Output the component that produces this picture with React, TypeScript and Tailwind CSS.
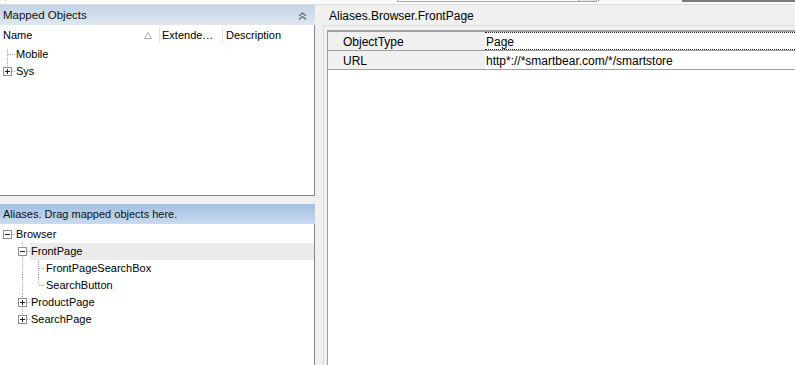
import React from "react";

const DOT = "#a3a3a3";

function V({ x, y1, y2 }: { x: number; y1: number; y2: number }) {
  return (
    <line x1={x + 0.5} x2={x + 0.5} y1={y1} y2={y2} stroke={DOT} strokeDasharray="1 1" shapeRendering="crispEdges" />
  );
}
function H({ y, x1, x2 }: { y: number; x1: number; x2: number }) {
  return (
    <line y1={y + 0.5} y2={y + 0.5} x1={x1} x2={x2} stroke={DOT} strokeDasharray="1 1" shapeRendering="crispEdges" />
  );
}
function Box({ x, y, plus }: { x: number; y: number; plus?: boolean }) {
  return (
    <g shapeRendering="crispEdges">
      <rect x={x + 0.5} y={y + 0.5} width={8} height={8} fill="#fff" stroke="#8e8f8f" />
      <line x1={x + 2} x2={x + 7} y1={y + 4.5} y2={y + 4.5} stroke="#222" />
      {plus && <line x1={x + 4.5} x2={x + 4.5} y1={y + 2} y2={y + 7} stroke="#222" />}
    </g>
  );
}

function Row({
  w,
  children,
  label,
  selected,
}: {
  w: number;
  children: React.ReactNode;
  label: string;
  selected?: boolean;
}) {
  return (
    <div className="flex h-[17px] items-stretch">
      <svg width={w} height={17} className="shrink-0">
        {children}
      </svg>
      <div className={`flex flex-1 items-center pl-px ${selected ? "bg-[#ebebeb]" : ""}`}>{label}</div>
    </div>
  );
}

function Row0({ w, children, label }: { w: number; children: React.ReactNode; label: string }) {
  return (
    <div className="flex h-[17px] items-stretch">
      <svg width={w} height={17} className="shrink-0">
        {children}
      </svg>
      <div className="flex flex-1 items-center">{label}</div>
    </div>
  );
}

export default function App() {
  return (
    <div
      className="w-[795px] h-[365px] overflow-hidden bg-[#f0f0f0] text-[11px] leading-none text-black flex flex-col"
      style={{ fontFamily: '"Liberation Sans", Arial, sans-serif' }}
    >
      {/* top strip */}
      <div className="h-[5px] shrink-0 bg-[#fbfbfb] border-b border-[#dcdcdc] flex items-start">
        <div className="ml-[5px] w-px h-px bg-[#bbb]" />
        <div className="ml-[391px] w-[183px] h-[2px] border-x border-b border-[#a9a9a9]" />
        <div className="w-[18px] h-[2px] bg-[#e3e3e3] border-r border-b border-[#a9a9a9]" />
        <div className="ml-px w-px h-px bg-[#777]" />
        <div className="ml-[83px] w-[113px] h-[2px] bg-[#7a7a7a]" />
      </div>

      <div className="flex flex-1 min-h-0">
        {/* left column */}
        <div className="w-[315px] shrink-0 flex flex-col">
          <div className="h-[20px] shrink-0 flex items-center justify-between pl-[3px] pr-[8px] pt-px bg-gradient-to-b from-[#c3d3e7] to-[#dfe7f1] text-[11.5px] text-[#111]">
            <span>Mapped Objects</span>
            <svg width="9" height="8" viewBox="0 0 9 8">
              <path d="M1 4 L4.5 1 L8 4 M1 7.5 L4.5 4.5 L8 7.5" stroke="#6b6b6b" strokeWidth="1.2" fill="none" />
            </svg>
          </div>
          <div className="h-[171px] shrink-0 bg-white border-r border-b border-[#828790] flex flex-col">
            <div className="h-[20px] flex items-stretch">
              <div className="w-[159px] flex items-center justify-between pl-[3px] pr-[7px]">
                <span>Name</span>
                <svg width="8" height="7" viewBox="0 0 8 7">
                  <path d="M0.5 6.5 L4 0.5 L7.5 6.5 Z" stroke="#a8a8a8" fill="none" />
                </svg>
              </div>
              <div className="w-px my-[2px] bg-[#e3e3e3]" />
              <div className="w-[62px] flex items-center pl-[2px]">Extende…</div>
              <div className="w-px my-[2px] bg-[#e3e3e3]" />
              <div className="flex items-center pl-[3px]">Description</div>
            </div>
            <div className="pt-px">
              <Row0 w={16} label="Mobile">
                <V x={7} y1={3} y2={17} />
                <H y={8} x1={8} x2={15} />
              </Row0>
              <Row0 w={16} label="Sys">
                <V x={7} y1={0} y2={4} />
                <Box x={3} y={4} plus />
                <H y={8} x1={12} x2={15} />
              </Row0>
            </div>
          </div>
          <div className="h-[8px] shrink-0" />
          <div className="h-[20px] shrink-0 flex items-center pl-[3px] pt-px bg-gradient-to-b from-[#a2bfe1] to-[#c9dcf0] text-[11px] text-[#111]">
            Aliases. Drag mapped objects here.
          </div>
          <div className="flex-1 bg-white border-r border-[#828790] pt-[2px]">
            <Row0 w={16} label="Browser">
              <Box x={3} y={4} />
              <H y={8} x1={12} x2={15} />
              <V x={22} y1={14} y2={17} />
            </Row0>
            <Row w={30} label="FrontPage" selected>
              <V x={22} y1={0} y2={4} />
              <Box x={18} y={4} />
              <V x={22} y1={13} y2={17} />
              <H y={8} x1={27} x2={30} />
              <V x={38} y1={14} y2={17} />
            </Row>
            <Row w={45} label="FrontPageSearchBox">
              <V x={22} y1={0} y2={17} />
              <V x={38} y1={0} y2={17} />
              <H y={8} x1={39} x2={45} />
            </Row>
            <Row w={45} label="SearchButton">
              <V x={22} y1={0} y2={17} />
              <V x={38} y1={0} y2={8} />
              <H y={8} x1={39} x2={45} />
            </Row>
            <Row w={30} label="ProductPage">
              <V x={22} y1={0} y2={4} />
              <Box x={18} y={4} plus />
              <V x={22} y1={13} y2={17} />
              <H y={8} x1={27} x2={30} />
            </Row>
            <Row w={30} label="SearchPage">
              <V x={22} y1={0} y2={4} />
              <Box x={18} y={4} plus />
              <H y={8} x1={27} x2={30} />
            </Row>
          </div>
        </div>

        {/* right panel */}
        <div className="flex-1 flex flex-col min-w-0">
          <div className="h-[20px] shrink-0 flex items-center pl-[14px] pt-px text-[12px]">Aliases.Browser.FrontPage</div>
          <div className="flex-1 ml-[8px] border-l border-t border-[#dcdcdc] pl-[3px] pt-[4px] flex">
            <div className="flex-1 bg-white border-l border-t-2 border-[#a0a0a0] flex flex-col">
              <div className="flex h-[19px] border-b border-[#a0a0a0]">
                <div className="w-[157px] bg-[#f0f0f0] flex items-center pl-[15px] pt-px text-[12px]">ObjectType</div>
                <div className="flex-1 flex items-center pl-px pt-px border-y border-dotted border-[#222] text-[12px]">Page</div>
              </div>
              <div className="flex h-[19px] border-b border-[#a0a0a0]">
                <div className="w-[157px] bg-[#f0f0f0] flex items-center pl-[15px] pt-px text-[12px]">URL</div>
                <div className="flex-1 flex items-center pl-px pt-px text-[12px]">http*://*smartbear.com/*/smartstore</div>
              </div>
            </div>
          </div>
        </div>
      </div>
    </div>
  );
}
